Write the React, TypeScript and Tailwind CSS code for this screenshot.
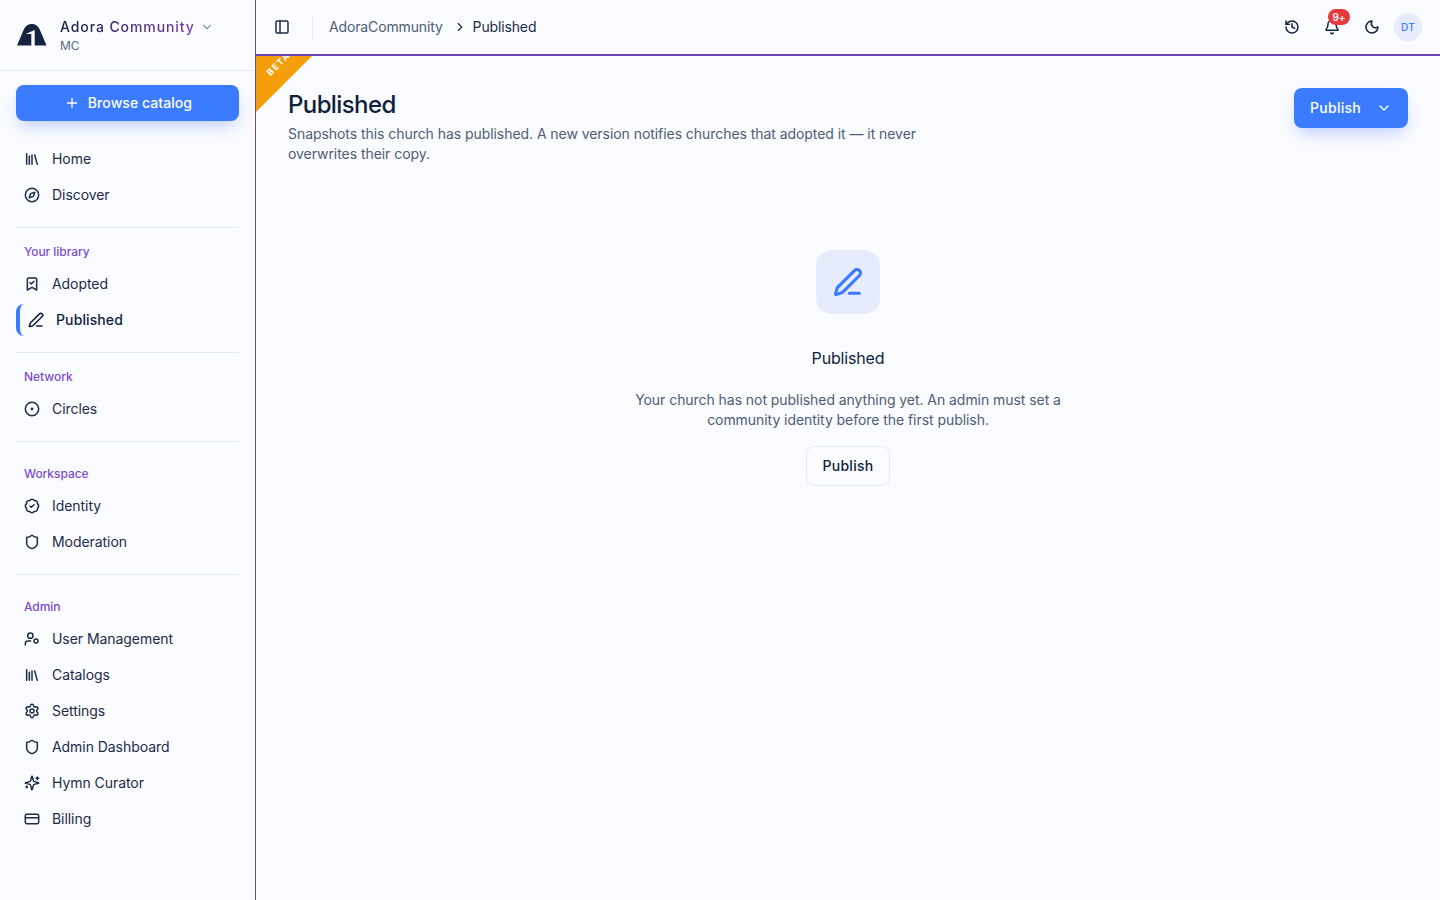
import React from 'react';
import {
  Library,
  Compass,
  BookmarkCheck,
  PenLine,
  CircleDot,
  BadgeCheck,
  Shield,
  Settings,
  CreditCard,
  History,
  Bell,
  Moon,
  PanelLeft,
  ChevronRight,
  ChevronDown,
  Plus,
} from 'lucide-react';

const UserRing = ({ className, strokeWidth = 2 }: { className?: string; strokeWidth?: number }) => (
  <svg viewBox="0 0 24 24" className={className} fill="none" stroke="currentColor" strokeWidth={strokeWidth} strokeLinecap="round" strokeLinejoin="round">
    <circle cx="9.5" cy="7" r="4" />
    <circle cx="18" cy="15" r="3" />
    <path d="M10 15H6a4 4 0 0 0-4 4v2" />
  </svg>
);

const Sparks = ({ className, strokeWidth = 2 }: { className?: string; strokeWidth?: number }) => (
  <svg viewBox="0 0 24 24" className={className} fill="none" stroke="currentColor" strokeWidth={strokeWidth} strokeLinecap="round" strokeLinejoin="round">
    <path d="M9.937 15.5A2 2 0 0 0 8.5 14.063l-6.135-1.582a.5.5 0 0 1 0-.962L8.5 9.936A2 2 0 0 0 9.937 8.5l1.582-6.135a.5.5 0 0 1 .963 0L14.063 8.5A2 2 0 0 0 15.5 9.937l6.135 1.581a.5.5 0 0 1 0 .964L15.5 14.063a2 2 0 0 0-1.437 1.437l-1.582 6.135a.5.5 0 0 1-.963 0z" />
    <path d="M20 3v4" />
    <path d="M22 5h-4" />
    <path d="M4 17v2" />
    <path d="M5 18H3" />
  </svg>
);

const NavItem = ({ icon: Icon, label, active }: { icon: React.ElementType; label: string; active?: boolean }) => (
  <a
    className={
      active
        ? 'my-[2px] flex h-8 items-center gap-3 rounded-lg border-l-[4px] border-[#3b7bff] pl-2 text-sm font-medium tracking-[0.008em] text-[#0f1f3d]'
        : 'flex h-9 items-center gap-3 rounded-lg pl-2 text-sm text-[#1e2c47]'
    }
  >
    <Icon className="h-4 w-4 shrink-0" strokeWidth={2.25} />
    <span>{label}</span>
  </a>
);

const SectionLabel = ({ children }: { children: React.ReactNode }) => (
  <div className="flex h-6 items-center px-2 text-xs font-medium text-[#7c4dcc]">{children}</div>
);

const App = () => {
  return (
    <div className="flex h-[900px] overflow-hidden bg-[#fafbfe] font-['Inter',sans-serif] tracking-[-0.0035em] text-[#0f1f3d]">
      {/* Sidebar */}
      <aside className="flex w-[256px] shrink-0 flex-col border-r border-[#6b46b8]">
        <div className="flex h-[71px] shrink-0 items-center gap-[13px] border-b border-[#e4eaf3] pl-[17px]">
          <svg viewBox="0 0 30 22" className="h-[22px] w-[30px] shrink-0 text-[#14233f]" fill="currentColor">
            <path d="M0 21.5 L7 5 C9 1.5 11 0 14.8 0 C18.6 0 20.5 1.5 22.5 5 L29.5 21.5 L17.7 21.5 L17.7 6 L8.7 10 L14.3 10 L14.3 21.5 Z" />
          </svg>
          <div>
            <div className="flex items-center gap-[5px]">
              <span className="bg-gradient-to-r from-[#0f1f3d] to-[#7c3aad] bg-clip-text text-sm leading-5 font-medium tracking-[0.065em] text-transparent">
                Adora Community
              </span>
              <ChevronDown className="h-3.5 w-3.5 text-[#8a94a6]" />
            </div>
            <div className="mt-px text-xs leading-4 text-[#5b6880]">MC</div>
          </div>
        </div>

        <div className="flex flex-col px-4 pt-[14px]">
          <button className="flex h-9 items-center justify-center gap-2 rounded-lg bg-[#3b7bff] pl-px text-sm font-medium tracking-[0.005em] text-white shadow-[0_8px_16px_-4px_rgba(59,123,255,0.35)]">
            <Plus className="h-4 w-4" />
            Browse catalog
          </button>

          <nav className="mt-[20px]">
            <NavItem icon={Library} label="Home" />
            <NavItem icon={Compass} label="Discover" />
          </nav>

          <div className="mt-[14px] border-t border-[#e4eaf3] pt-3">
            <SectionLabel>Your library</SectionLabel>
            <div className="mt-[2px]">
              <NavItem icon={BookmarkCheck} label="Adopted" />
              <NavItem icon={PenLine} label="Published" active />
            </div>
          </div>

          <div className="mt-[14px] border-t border-[#e4eaf3] pt-3">
            <SectionLabel>Network</SectionLabel>
            <div className="mt-[2px]">
              <NavItem icon={CircleDot} label="Circles" />
            </div>
          </div>

          <div className="mt-[14px] border-t border-[#e4eaf3] pt-[20px]">
            <SectionLabel>Workspace</SectionLabel>
            <div className="mt-[2px]">
              <NavItem icon={BadgeCheck} label="Identity" />
              <NavItem icon={Shield} label="Moderation" />
            </div>
          </div>

          <div className="mt-[14px] border-t border-[#e4eaf3] pt-[20px]">
            <SectionLabel>Admin</SectionLabel>
            <div className="mt-[2px]">
              <NavItem icon={UserRing} label="User Management" />
              <NavItem icon={Library} label="Catalogs" />
              <NavItem icon={Settings} label="Settings" />
              <NavItem icon={Shield} label="Admin Dashboard" />
              <NavItem icon={Sparks} label="Hymn Curator" />
              <NavItem icon={CreditCard} label="Billing" />
            </div>
          </div>
        </div>
      </aside>

      {/* Main */}
      <div className="flex min-w-0 flex-1 flex-col">
        <header className="flex h-[56px] shrink-0 items-center border-b-2 border-[#6b46b8] pr-[18px]">
          <div className="flex h-6 w-[57px] shrink-0 items-center border-r border-[#e4eaf3] pl-[18px]">
            <PanelLeft className="h-4 w-4 text-[#1e2c47]" strokeWidth={2.25} />
          </div>
          <div className="ml-4 flex items-center text-sm tracking-[-0.01em]">
            <span className="text-[#4f5d75]">AdoraCommunity</span>
            <ChevronRight className="mr-[6px] ml-[10px] h-3.5 w-3.5 text-[#1e2c47]" />
            <span className="text-[#1e2c47]">Published</span>
          </div>
          <div className="ml-auto flex items-center">
            <div className="flex h-7 w-10 items-center justify-center">
              <History className="h-4 w-4 text-[#14233f]" strokeWidth={2.25} />
            </div>
            <div className="relative flex h-7 w-10 items-center justify-center">
              <Bell className="h-4 w-4 text-[#14233f]" strokeWidth={2.25} />
              <span className="absolute top-[-4px] left-[16px] flex h-4 w-[22px] items-center justify-center rounded-full bg-[#e5393b] text-[10px] font-semibold text-white">
                9+
              </span>
            </div>
            <div className="flex h-7 w-10 items-center justify-center">
              <Moon className="h-4 w-4 text-[#14233f]" strokeWidth={2.25} />
            </div>
            <div className="ml-[2px] flex h-7 w-7 items-center justify-center rounded-full bg-[#e6ecfb] text-[10px] font-medium tracking-wide text-[#3b7bff]">
              DT
            </div>
          </div>
        </header>

        <main className="relative flex-1 px-8 pt-8">
          {/* Beta corner ribbon */}
          <div className="absolute top-0 left-0 h-14 w-14 overflow-hidden">
            <div className="absolute inset-0 bg-[#f59e0b] [clip-path:polygon(0_0,100%_0,0_100%)]" />
            <span className="absolute top-[1px] left-[8px] -rotate-45 text-[9px] font-bold tracking-[0.15em] text-white">
              BETA
            </span>
          </div>

          <div className="flex items-start justify-between">
            <div>
              <h1 className="mt-px text-2xl leading-8 font-medium tracking-tight text-[#0f1f3d]">Published</h1>
              <p className="mt-[3px] max-w-[640px] text-sm leading-5 text-[#4f5d75]">
                Snapshots this church has published. A new version notifies churches that adopted it — it never overwrites their copy.
              </p>
            </div>
            <button className="flex h-10 w-[114px] items-center justify-between rounded-lg bg-[#3b7bff] px-4 text-sm font-medium tracking-[0.02em] text-white shadow-[0_8px_16px_-4px_rgba(59,123,255,0.35)]">
              Publish
              <ChevronDown className="h-4 w-4" />
            </button>
          </div>

          <div className="mt-[86px] flex flex-col items-center text-center">
            <div className="flex h-16 w-16 items-center justify-center rounded-2xl bg-[#e6ecfb]">
              <PenLine className="h-[30px] w-[30px] text-[#3b7bff]" strokeWidth={2.5} />
            </div>
            <h2 className="mt-[32px] text-base leading-6 font-normal tracking-[-0.01em] text-[#0f1f3d]">Published</h2>
            <p className="mt-[20px] max-w-[448px] text-sm leading-5 text-[#4f5d75]">
              Your church has not published anything yet. An admin must set a community identity before the first publish.
            </p>
            <button className="mt-4 flex h-10 w-[84px] items-center justify-center rounded-lg border border-[#e4eaf3] text-sm font-medium tracking-[0.02em] text-[#0f1f3d]">
              Publish
            </button>
          </div>
        </main>
      </div>
    </div>
  );
};

export default App;
